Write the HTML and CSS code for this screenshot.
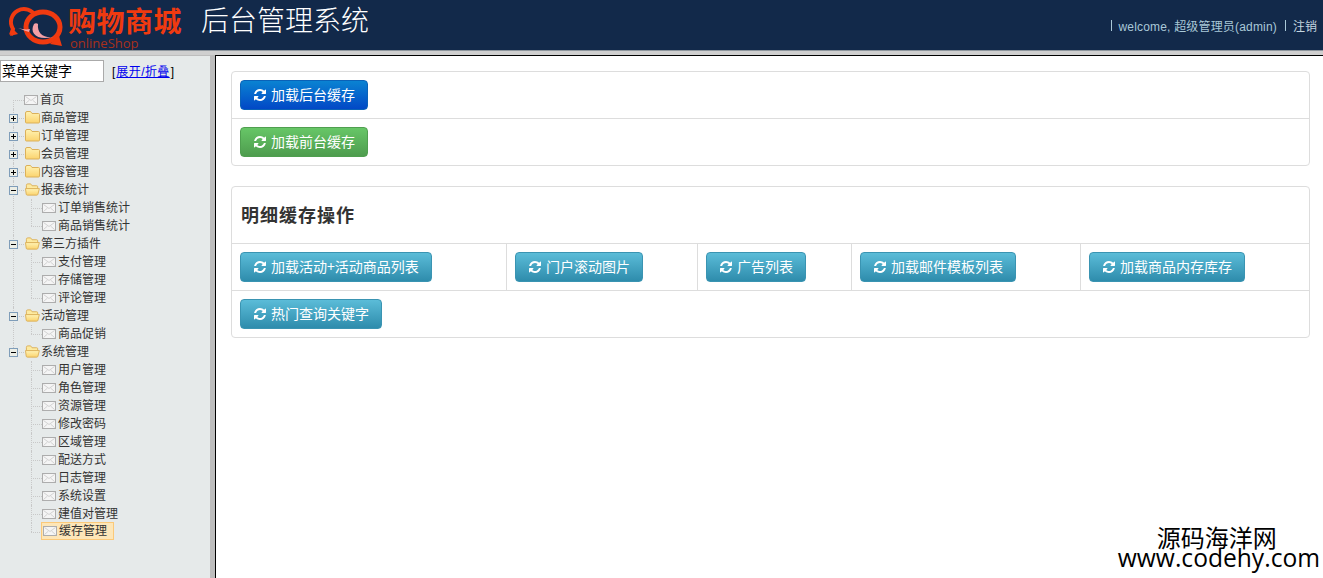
FILE: index.html
```html
<!DOCTYPE html>
<html lang="zh-CN">
<head>
<meta charset="utf-8">
<title>后台管理系统</title>
<link rel="stylesheet" href="styles.css">
</head>
<body>
<svg class="defs" aria-hidden="true">
  <defs>
    <linearGradient id="g-folder" x1="0" y1="0" x2="0" y2="1"><stop offset="0" stop-color="#fff3b4"/><stop offset="1" stop-color="#fbd36e"/></linearGradient>
  </defs>
  <symbol id="i-refresh" viewBox="0 0 1792 1792"><path fill="currentColor" d="M1639 1056q0 5-1 7-64 268-268 434.5t-478 166.5q-146 0-282.5-55t-243.5-157l-129 129q-19 19-45 19t-45-19-19-45v-448q0-26 19-45t45-19h448q26 0 45 19t19 45-19 45l-137 137q71 66 161 102t187 36q134 0 250-65t186-179q11-17 53-117 8-23 30-23h192q13 0 22.5 9.5t9.5 22.5zm25-800v448q0 26-19 45t-45 19h-448q-26 0-45-19t-19-45 19-45l138-138q-148-137-349-137-134 0-250 65t-186 179q-11 17-53 117-8 23-30 23h-199q-13 0-22.5-9.5t-9.5-22.5v-7q65-268 270-434.5t480-166.5q146 0 284 55.5t245 156.5l130-129q19-19 45-19t45 19 19 45z"/></symbol>
  <symbol id="i-mail" viewBox="0 0 14 10"><rect x=".5" y=".5" width="13" height="9" fill="#f5f5f5" stroke="#adadad"/><path d="M1.500 1.500l5.500 4 5.500-4M1.500 8.500l4-3.500M12.500 8.500l-4-3.500" fill="none" stroke="#d2d2d2"/></symbol>
  <symbol id="i-folder" viewBox="0 0 15 13"><path d="M.5 2q0-1.500 1.500-1.500h3.500l1.500 2h6.500q1 0 1 1v7.500q0 1-1 1h-12q-1 0-1-1z" fill="url(#g-folder)" stroke="#dbb05a"/></symbol>
  <symbol id="i-folder-open" viewBox="0 0 16 13"><path d="M1.500 2q0-1.500 1.500-1.500h3l1.500 2h5q1 0 1 1v2.500h-12z" fill="#fdeaa0" stroke="#dbb05a"/><path d="M.5 5.500h14.800l-1.500 6q-.3 1-1.300 1h-10q-1 0-1.200-1z" fill="url(#g-folder)" stroke="#dbb05a"/></symbol>
  <symbol id="i-plus" viewBox="0 0 9 9"><rect x=".5" y=".5" width="8" height="8" fill="#eceee6" stroke="#7f9db9"/><path d="M2 4.500h5M4.500 2v5" stroke="#000"/></symbol>
  <symbol id="i-minus" viewBox="0 0 9 9"><rect x=".5" y=".5" width="8" height="8" fill="#eceee6" stroke="#7f9db9"/><path d="M2 4.500h5" stroke="#000"/></symbol>
</svg>

<header class="top">
  <div class="brand">
    <svg class="logo-mark" viewBox="0 0 66 48" aria-hidden="true">
      <path d="M10 35l2-6a13 13 0 1 1 16 5" fill="none" stroke="#f03a10" stroke-width="4"/>
      <path d="M9 36l8-2-5-5z" fill="#f03a10"/>
      <ellipse cx="42" cy="27" rx="17" ry="15" fill="#12294a" stroke="#f03a10" stroke-width="5"/>
      <path d="M61 46l-12-2 9-8z" fill="#f03a10"/>
      <path d="M33 24c-5 9 3 17 19 13-10 1-16-4-15-13-1-1-3-1-4 0z" fill="#f5a0a6"/>
      <path d="M17 28c5 2 8 3 11 4l1-3c-4 1-8 0-12-1z" fill="#f5a0a6"/>
    </svg>
    <div class="logo-text">
      <span class="logo-name">购物商城</span>
      <span class="logo-sub">onlineShop</span>
    </div>
    <h1 class="sys-title">后台管理系统</h1>
  </div>
  <nav class="user-bar">
    <span class="sep"></span>
    <span class="welcome">welcome, 超级管理员(admin)</span>
    <span class="sep"></span>
    <a class="logout">注销</a>
  </nav>
</header>
<div class="band"></div>

<div class="main">
  <aside class="side">
    <div class="search">
      <input class="search-input" type="text" value="菜单关键字">
      <span class="toggle">[<a href="#">展开/折叠</a>]</span>
    </div>
    <ul class="tree">
      <li class="first"><div class="node"><span class="sw"></span><svg class="ic-mail"><use href="#i-mail"/></svg><span class="txt">首页</span></div></li>
      <li><div class="node"><svg class="sw"><use href="#i-plus"/></svg><svg class="ic-folder"><use href="#i-folder"/></svg><span class="txt">商品管理</span></div></li>
      <li><div class="node"><svg class="sw"><use href="#i-plus"/></svg><svg class="ic-folder"><use href="#i-folder"/></svg><span class="txt">订单管理</span></div></li>
      <li><div class="node"><svg class="sw"><use href="#i-plus"/></svg><svg class="ic-folder"><use href="#i-folder"/></svg><span class="txt">会员管理</span></div></li>
      <li><div class="node"><svg class="sw"><use href="#i-plus"/></svg><svg class="ic-folder"><use href="#i-folder"/></svg><span class="txt">内容管理</span></div></li>
      <li>
        <div class="node"><svg class="sw"><use href="#i-minus"/></svg><svg class="ic-folder"><use href="#i-folder-open"/></svg><span class="txt">报表统计</span></div>
        <ul class="sub">
          <li><div class="node"><span class="sw"></span><svg class="ic-mail"><use href="#i-mail"/></svg><span class="txt">订单销售统计</span></div></li>
          <li class="last"><div class="node"><span class="sw"></span><svg class="ic-mail"><use href="#i-mail"/></svg><span class="txt">商品销售统计</span></div></li>
        </ul>
      </li>
      <li>
        <div class="node"><svg class="sw"><use href="#i-minus"/></svg><svg class="ic-folder"><use href="#i-folder-open"/></svg><span class="txt">第三方插件</span></div>
        <ul class="sub">
          <li><div class="node"><span class="sw"></span><svg class="ic-mail"><use href="#i-mail"/></svg><span class="txt">支付管理</span></div></li>
          <li><div class="node"><span class="sw"></span><svg class="ic-mail"><use href="#i-mail"/></svg><span class="txt">存储管理</span></div></li>
          <li class="last"><div class="node"><span class="sw"></span><svg class="ic-mail"><use href="#i-mail"/></svg><span class="txt">评论管理</span></div></li>
        </ul>
      </li>
      <li>
        <div class="node"><svg class="sw"><use href="#i-minus"/></svg><svg class="ic-folder"><use href="#i-folder-open"/></svg><span class="txt">活动管理</span></div>
        <ul class="sub">
          <li class="last"><div class="node"><span class="sw"></span><svg class="ic-mail"><use href="#i-mail"/></svg><span class="txt">商品促销</span></div></li>
        </ul>
      </li>
      <li class="last">
        <div class="node"><svg class="sw"><use href="#i-minus"/></svg><svg class="ic-folder"><use href="#i-folder-open"/></svg><span class="txt">系统管理</span></div>
        <ul class="sub">
          <li><div class="node"><span class="sw"></span><svg class="ic-mail"><use href="#i-mail"/></svg><span class="txt">用户管理</span></div></li>
          <li><div class="node"><span class="sw"></span><svg class="ic-mail"><use href="#i-mail"/></svg><span class="txt">角色管理</span></div></li>
          <li><div class="node"><span class="sw"></span><svg class="ic-mail"><use href="#i-mail"/></svg><span class="txt">资源管理</span></div></li>
          <li><div class="node"><span class="sw"></span><svg class="ic-mail"><use href="#i-mail"/></svg><span class="txt">修改密码</span></div></li>
          <li><div class="node"><span class="sw"></span><svg class="ic-mail"><use href="#i-mail"/></svg><span class="txt">区域管理</span></div></li>
          <li><div class="node"><span class="sw"></span><svg class="ic-mail"><use href="#i-mail"/></svg><span class="txt">配送方式</span></div></li>
          <li><div class="node"><span class="sw"></span><svg class="ic-mail"><use href="#i-mail"/></svg><span class="txt">日志管理</span></div></li>
          <li><div class="node"><span class="sw"></span><svg class="ic-mail"><use href="#i-mail"/></svg><span class="txt">系统设置</span></div></li>
          <li><div class="node"><span class="sw"></span><svg class="ic-mail"><use href="#i-mail"/></svg><span class="txt">建值对管理</span></div></li>
          <li class="last"><div class="node"><span class="sw"></span><span class="picked"><svg class="ic-mail"><use href="#i-mail"/></svg><span class="txt">缓存管理</span></span></div></li>
        </ul>
      </li>
    </ul>
  </aside>

  <main class="content">
    <section class="panel">
      <div class="row"><button class="btn btn-primary"><svg class="ic-btn"><use href="#i-refresh"/></svg>加载后台缓存</button></div>
      <div class="row"><button class="btn btn-success"><svg class="ic-btn"><use href="#i-refresh"/></svg>加载前台缓存</button></div>
    </section>
    <section class="panel">
      <h2 class="panel-title">明细缓存操作</h2>
      <div class="row row-cells">
        <div class="cell cell-a"><button class="btn btn-info"><svg class="ic-btn"><use href="#i-refresh"/></svg>加载活动+活动商品列表</button></div>
        <div class="cell cell-b"><button class="btn btn-info"><svg class="ic-btn"><use href="#i-refresh"/></svg>门户滚动图片</button></div>
        <div class="cell cell-c"><button class="btn btn-info"><svg class="ic-btn"><use href="#i-refresh"/></svg>广告列表</button></div>
        <div class="cell cell-d"><button class="btn btn-info"><svg class="ic-btn"><use href="#i-refresh"/></svg>加载邮件模板列表</button></div>
        <div class="cell cell-e"><button class="btn btn-info"><svg class="ic-btn"><use href="#i-refresh"/></svg>加载商品内存库存</button></div>
      </div>
      <div class="row"><button class="btn btn-info"><svg class="ic-btn"><use href="#i-refresh"/></svg>热门查询关键字</button></div>
    </section>
  </main>
</div>

<div class="watermark">
  <span class="wm-cn">源码海洋网</span>
  <span class="wm-en">www.codehy.com</span>
</div>
</body>
</html>
```
FILE: styles.css
```css
* { box-sizing: border-box; }
html, body { margin: 0; padding: 0; height: 100%; }
body {
  display: flex;
  flex-direction: column;
  height: 578px;
  overflow: hidden;
  position: relative;
  background: #fff;
  color: #333;
  font-family: "Liberation Sans", "Noto Sans CJK SC", sans-serif;
  font-size: 12px;
}
.defs { position: absolute; width: 0; height: 0; }

/* header */
.top {
  height: 50px;
  flex: none;
  display: flex;
  justify-content: space-between;
  background: #12294a;
}
.brand { display: flex; align-items: flex-start; }
.logo-mark { width: 66px; height: 48px; margin-left: 1px; flex: none; }
.logo-text { display: flex; flex-direction: column; width: 133px; margin-left: 1px; }
.logo-name {
  font-size: 28px;
  line-height: 28px;
  margin-top: 9px;
  font-weight: 700;
  letter-spacing: .5px;
  color: #f03a10;
}
.logo-sub {
  font-size: 13px;
  line-height: 13px;
  margin-left: 2px;
  color: #a8301a;
  font-family: "Open Sans", sans-serif;
}
.sys-title {
  margin: 2px 0 0;
  font-size: 28px;
  line-height: 40px;
  font-weight: 300;
  color: #fff;
}
.user-bar {
  display: flex;
  align-items: center;
  height: 50px;
  padding: 1px 6px 0 0;
  color: #a9c8d8;
  font-size: 12px;
}
.welcome { letter-spacing: .18px; }
.sep { width: 1px; height: 11px; background: #a9c8d8; margin: 0 7px 0 8px; }
.logout { color: #c4d6e0; }

.band {
  height: 5px;
  flex: none;
  background: #cfcfcf;
  border-top: 1px solid #8d959c;
}

/* layout */
.main { flex: 1; display: flex; min-height: 0; }

.side {
  width: 215px;
  flex: none;
  background: #e6eaea;
  border-top: 1px solid #bdbdbd;
  border-right: 5px solid #bdbdbd;
  padding-top: 4px;
}
.search { display: flex; align-items: center; height: 22px; }
.search-input {
  width: 104px;
  height: 22px;
  padding: 0 1px 2px;
  border: 1px solid #aaa;
  border-radius: 0;
  background: #fff;
  color: #000;
  font: 14px "Noto Sans CJK SC", sans-serif;
}
.toggle { margin-left: 8px; padding-bottom: 2px; color: #000; }
.toggle a { color: #00e; margin: 0 1px; letter-spacing: .4px; }

/* tree */
.tree, .sub { list-style: none; margin: 0; padding: 0; }
.tree { margin-top: 9px; }
.sub { padding-left: 18px; }
.tree li { position: relative; }
.tree li::before {
  content: "";
  position: absolute;
  left: 13px;
  top: 0;
  bottom: 0;
  border-left: 1px dotted #c8c8c8;
}
.tree li.first::before { top: 9px; }
.tree li.last::before { bottom: auto; height: 9px; }
.node {
  position: relative;
  display: flex;
  align-items: center;
  height: 18px;
  padding-left: 9px;
  white-space: nowrap;
}
.node::before {
  content: "";
  position: absolute;
  left: 13px;
  top: 9px;
  width: 11px;
  border-top: 1px dotted #c8c8c8;
}
.sw { position: relative; width: 9px; height: 9px; flex: none; margin-right: 7px; }
.ic-mail { position: relative; width: 14px; height: 10px; flex: none; margin: 0 2px 0 -1px; }
.ic-folder { position: relative; width: 15px; height: 13px; flex: none; margin: 0 1px 2px 0; }
.txt { font-size: 12px; color: #333; line-height: 18px; }
.picked {
  position: relative;
  display: flex;
  align-items: center;
  height: 18px;
  padding: 0 6px 0 2px;
  margin: 0 0 2px -2px;
  background: #fde6b8;
  border: 1px solid #fbc979;
}

/* content */
.content {
  flex: 1;
  min-width: 0;
  border-top: 1px solid #000;
  border-left: 1px solid #000;
  padding: 15px 13px 0 15px;
}
.panel {
  border: 1px solid #ddd;
  border-radius: 4px;
  margin-bottom: 20px;
}
.panel-title {
  margin: 0;
  height: 56px;
  padding-left: 9px;
  font-size: 18px;
  line-height: 58px;
  font-weight: 700;
  letter-spacing: 1px;
  color: #333;
}
.row {
  padding: 8px;
  border-top: 1px solid #ddd;
}
.panel > .row:first-child { border-top: 0; }
.row-cells { display: flex; padding: 0; }
.cell { padding: 8px; border-left: 1px solid #ddd; }
.cell-a { width: 274px; border-left: 0; }
.cell-b { width: 191px; }
.cell-c { width: 154px; }
.cell-d { width: 229px; }
.cell-e { flex: 1; }

.btn {
  display: block;
  height: 30px;
  padding: 0 12px 2px 13px;
  border: 1px solid;
  border-radius: 4px;
  color: #fff;
  font: 14px/26px "Noto Sans CJK SC", sans-serif;
  white-space: nowrap;
}
.ic-btn { width: 14px; height: 14px; margin: 0 4px 0 -1px; vertical-align: -2px; }
.btn-primary { background: linear-gradient(#0a83d2, #0248c6); border-color: #0a62b8; }
.btn-success { background: linear-gradient(#67c667, #4e9c4e); border-color: #4f9f4f; }
.btn-info { background: linear-gradient(#5bbcd8, #2e8cac); border-color: #3a94b2; }

/* overlay */
.watermark {
  position: absolute;
  right: 3px;
  bottom: 10px;
  display: flex;
  flex-direction: column;
  align-items: flex-start;
  color: #000;
}
.wm-cn { font: 24px/22px "Noto Sans CJK SC", sans-serif; margin-left: 39px; }
.wm-en { font: 24.6px/20px "Open Sans", sans-serif; }
```
